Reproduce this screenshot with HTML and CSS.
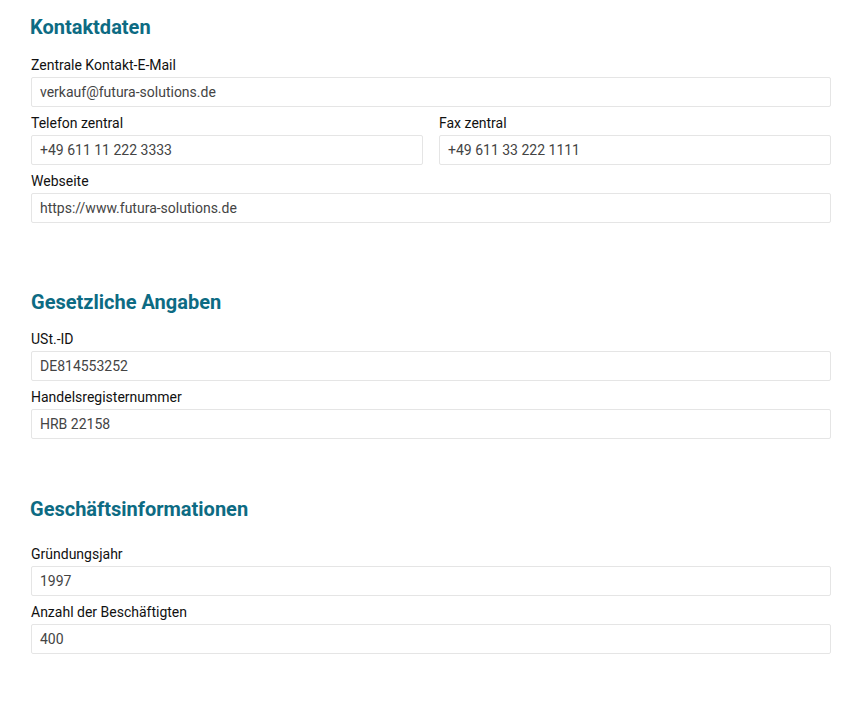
FILE: index.html
```html
<!DOCTYPE html>
<html lang="de">
<head>
<meta charset="utf-8">
<link rel="stylesheet" href="styles.css">
</head>
<body>
<main class="page">
  <section class="section s1">
    <h2 class="title">Kontaktdaten</h2>
    <div class="field">
      <label class="label">Zentrale Kontakt-E-Mail</label>
      <div class="input">verkauf@futura-solutions.de</div>
    </div>
    <div class="row">
      <div class="field">
        <label class="label">Telefon zentral</label>
        <div class="input">+49 611 11 222 3333</div>
      </div>
      <div class="field">
        <label class="label">Fax zentral</label>
        <div class="input">+49 611 33 222 1111</div>
      </div>
    </div>
    <div class="field">
      <label class="label">Webseite</label>
      <div class="input">https://www.futura-solutions.de</div>
    </div>
  </section>
  <section class="section s2">
    <h2 class="title">Gesetzliche Angaben</h2>
    <div class="field">
      <label class="label">USt.-ID</label>
      <div class="input">DE814553252</div>
    </div>
    <div class="field">
      <label class="label">Handelsregisternummer</label>
      <div class="input">HRB 22158</div>
    </div>
  </section>
  <section class="section s3">
    <h2 class="title">Geschäftsinformationen</h2>
    <div class="field">
      <label class="label">Gründungsjahr</label>
      <div class="input">1997</div>
    </div>
    <div class="field">
      <label class="label">Anzahl der Beschäftigten</label>
      <div class="input">400</div>
    </div>
  </section>
</main>
</body>
</html>
```
FILE: styles.css
```css
* { box-sizing: border-box; }
body {
  margin: 0;
  background: #fff;
  font-family: Roboto, "Liberation Sans", sans-serif;
  color: #111;
}
.page {
  width: 800px;
  margin-left: 31px;
  padding-top: 15px;
}
.section {
  display: flex;
  flex-direction: column;
  gap: 7px;
}
.title {
  margin: 0 0 10px -1px;
  font-size: 20px;
  line-height: 24px;
  font-weight: 700;
  color: #0d6b83;
}
.s2 { margin-top: 67px; }
.s2 .title { margin-left: 0; margin-bottom: 9px; }
.s3 { margin-top: 58px; }
.s3 .title { margin-bottom: 17px; }
.row {
  display: grid;
  grid-template-columns: 1fr 1fr;
  gap: 16px;
}
.field {
  display: flex;
  flex-direction: column;
  gap: 3px;
}
.label {
  font-size: 14px;
  line-height: 18px;
  color: #111;
}
.input {
  height: 30px;
  border: 1px solid #e5e5e5;
  border-radius: 2px;
  padding: 0 8px;
  font-size: 14px;
  line-height: 28px;
  color: #444;
}
```
